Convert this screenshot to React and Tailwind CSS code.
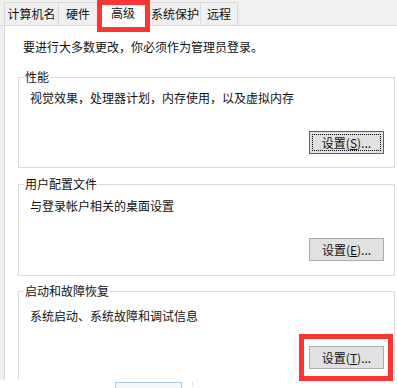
import React from "react";

const tabs = [
  { label: "计算机名", width: "w-[54px]" },
  { label: "硬件", width: "w-[39px]" },
  { label: "高级", width: "w-[52px]", active: true },
  { label: "系统保护", width: "w-[51px]" },
  { label: "远程", width: "w-[38px]", last: true },
];

function SettingsButton({ letter, focused }) {
  return (
    <button
      type="button"
      className={
        focused
          ? "relative flex h-[23px] w-[75px] items-center justify-center border border-[#0078d7] bg-[#e1e1e1] text-[12px] leading-[16px] text-[#111]"
          : "relative flex h-[23px] w-[75px] items-center justify-center border border-[#adadad] bg-[#e1e1e1] text-[12px] leading-[16px] text-[#111]"
      }
    >
      {focused ? <span className="absolute inset-[2px] border border-dotted border-black" /> : null}
      <span>
        设置(<span className="underline">{letter}</span>)...
      </span>
    </button>
  );
}

function GroupBox({ title, description, letter, focused, className, descGap, buttonGap }) {
  return (
    <fieldset className={`w-[377px] border border-[#dcdcdc] ${className}`}>
      <legend className="ml-[5px] px-[1px] leading-[16px]">{title}</legend>
      <p className={`pl-[11px] leading-[16px] ${descGap}`}>{description}</p>
      <div className={`flex justify-end pr-[10px] ${buttonGap}`}>
        <SettingsButton letter={letter} focused={focused} />
      </div>
    </fieldset>
  );
}

export default function App() {
  return (
    <div className="relative h-[388px] w-[397px] overflow-hidden bg-white font-['Microsoft_YaHei','Noto_Sans_CJK_SC',sans-serif] text-[12px] text-[#111]">
      <div className="flex h-[26px] items-end border-b border-[#d9d9d9] bg-[#f0f0f0] pl-[4px]">
        {tabs.map((tab) =>
          tab.active ? (
            <div
              key={tab.label}
              className={`relative z-10 -mb-px flex h-[26px] ${tab.width} items-center justify-center border-x border-t border-[#d9d9d9] bg-white pb-[2px] leading-[16px]`}
            >
              {tab.label}
            </div>
          ) : (
            <div
              key={tab.label}
              className={`flex h-[23px] ${tab.width} items-center justify-center border-l border-t border-[#d9d9d9] bg-[#f0f0f0] leading-[16px] ${tab.last ? "border-r" : ""}`}
            >
              {tab.label}
            </div>
          )
        )}
      </div>

      <div className="flex h-[354px] overflow-hidden">
        <div className="w-[5px] shrink-0 border-r border-[#d9d9d9] bg-[#f0f0f0]" />
        <div className="flex-1 bg-white pl-[13px] pt-[13px]">
          <p className="pl-[5px] leading-[16px]">要进行大多数更改，你必须作为管理员登录。</p>
          <GroupBox
            title="性能"
            description="视觉效果，处理器计划，内存使用，以及虚拟内存"
            letter="S"
            focused
            className="mt-[14px] h-[99px]"
            descGap="mt-[5px]"
            buttonGap="mt-[25px]"
          />
          <GroupBox
            title="用户配置文件"
            description="与登录帐户相关的桌面设置"
            letter="E"
            className="mt-[8px] h-[100px]"
            descGap="mt-[6px]"
            buttonGap="mt-[24px]"
          />
          <GroupBox
            title="启动和故障恢复"
            description="系统启动、系统故障和调试信息"
            letter="T"
            className="mt-[7px] h-[120px]"
            descGap="mt-[9px]"
            buttonGap="mt-[22px]"
          />
        </div>
      </div>

      <div className="flex h-[8px] items-start bg-white">
        <div className="ml-[115px] mt-[2px] h-[6px] w-[67px] border-x border-t border-[#a9cbea] bg-[#f3f8fd]" />
        <div className="ml-[10px] mt-[2px] h-[5px] w-px bg-[#e0e0e0]" />
      </div>

      {/* red annotation boxes */}
      <div className="absolute left-[97px] top-0 z-20 h-[32px] w-[53px] border-[5px] border-[#fb3434]" />
      <div className="absolute left-[299px] top-[334px] z-20 h-[47px] w-[94px] border-[5px] border-[#fb3434]" />
    </div>
  );
}
